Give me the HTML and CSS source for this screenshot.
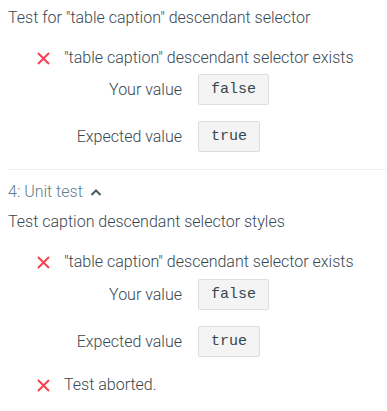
FILE: index.html
```html
<!DOCTYPE html>
<html lang="en">
<head>
    <meta charset="UTF-8">
    <title>Unit tests</title>
    <link rel="stylesheet" href="styles.css">
</head>
<body>
    <div class="test">
        <div class="test-desc">Test for "table caption" descendant selector</div>
        <div class="result">
            <div class="result-line">
                <svg class="fail-icon" width="13" height="13" viewBox="0 0 13 13">
                    <path d="M1 1 L12 12 M12 1 L1 12" stroke="#f44350" stroke-width="2"/>
                </svg>
                <span>"table caption" descendant selector exists</span>
            </div>
            <div class="values">
                <div class="label">Your value</div>
                <div><span class="code">false</span></div>
                <div class="label">Expected value</div>
                <div><span class="code">true</span></div>
            </div>
        </div>
    </div>

    <div class="test bordered">
        <div class="test-head">
            4: Unit test
            <svg class="chevron" width="12" height="10" viewBox="0 0 12 10">
                <path d="M1.5 8 L6 3.5 L10.5 8" fill="none" stroke="#455a64" stroke-width="2"/>
            </svg>
        </div>
        <div class="test-desc">Test caption descendant selector styles</div>
        <div class="result">
            <div class="result-line">
                <svg class="fail-icon" width="13" height="13" viewBox="0 0 13 13">
                    <path d="M1 1 L12 12 M12 1 L1 12" stroke="#f44350" stroke-width="2"/>
                </svg>
                <span>"table caption" descendant selector exists</span>
            </div>
            <div class="values">
                <div class="label">Your value</div>
                <div><span class="code">false</span></div>
                <div class="label">Expected value</div>
                <div><span class="code">true</span></div>
            </div>
        </div>
        <div class="result">
            <div class="result-line">
                <svg class="fail-icon" width="13" height="13" viewBox="0 0 13 13">
                    <path d="M1 1 L12 12 M12 1 L1 12" stroke="#f44350" stroke-width="2"/>
                </svg>
                <span>Test aborted.</span>
            </div>
        </div>
    </div>
</body>
</html>
```

FILE: styles.css
```css
body {
    margin: 0;
    padding: 0 0 0 8px;
    font-family: Roboto, "Liberation Sans", sans-serif;
    font-size: 16px;
    font-weight: 300;
    color: #37474f;
    background-color: white;
}
.test {
    padding-top: 8px;
}
.bordered {
    border-top: 1px solid #eee;
    padding-top: 12px;
}
.test-head {
    color: #607d8b;
    line-height: 20px;
    display: flex;
    align-items: center;
    gap: 7px;
    margin-bottom: 10px;
}
.chevron {
    display: block;
}
.test-desc {
    line-height: 20px;
    margin-bottom: 20px;
}
.result {
    padding-left: 29px;
}
.result-line {
    display: flex;
    align-items: center;
    line-height: 20px;
    gap: 14px;
}
.fail-icon {
    display: block;
    flex-shrink: 0;
}
.values {
    display: grid;
    grid-template-columns: 118px auto;
    column-gap: 16px;
    row-gap: 16px;
    align-items: center;
    margin: 6px 0 17px 27px;
}
.bordered .values {
    margin: 7px 0 18px 27px;
}
.label {
    text-align: right;
}
.code {
    display: inline-block;
    font-family: "Liberation Mono", monospace;
    font-size: 15px;
    line-height: 29px;
    padding: 0 12px;
    background-color: #f4f4f4;
    border: 1px solid #ddd;
    border-radius: 2px;
}
```
